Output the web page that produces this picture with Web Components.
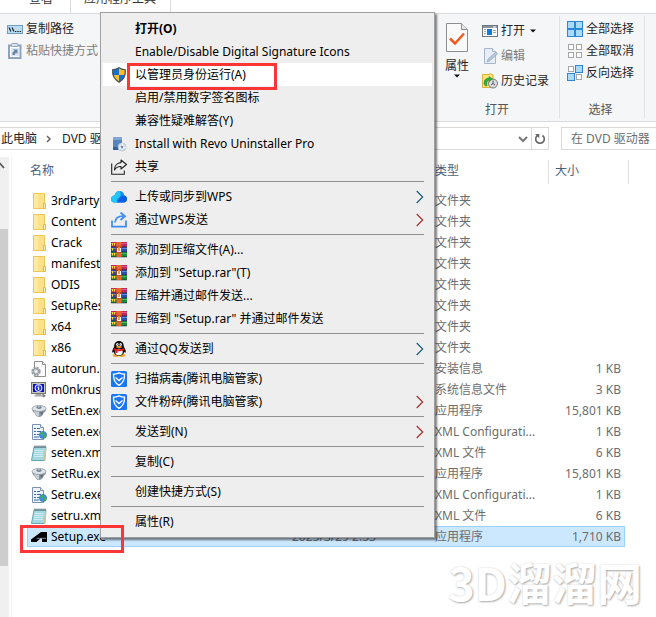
<!DOCTYPE html>
<html lang="zh-CN">
<head>
<meta charset="utf-8">
<title>DVD 驱动器</title>
<style>
html, body { margin: 0; height: 100%; overflow: hidden; background: #fff; }
body { font: 12px/16px "Noto Sans", "Noto Sans CJK SC", sans-serif; color: #000; }
</style>
</head>
<body>
<explorer-window></explorer-window>
<script>
const ICONS = {
  path: ['0 0 16 16', '<rect x="0.5" y="4.5" width="15" height="8" fill="#b9dcf7" stroke="#6f9fc6"/><path d="M2 6.5l2 4M5 6.5l2 4" stroke="#222" stroke-width="1.2"/><path d="M8 10h1.400v1H8zM10.300 10h1.400v1h-1.400zM12.600 10H14v1h-1.400z" fill="#222"/>'],
  paste: ['0 0 16 16', '<path d="M2 2.500h11.500v12.500H2z" fill="#fff" stroke="#8fa3bd" stroke-width="2"/><rect x="4.500" y="0.500" width="6.500" height="3" rx="1" fill="#dce3ec" stroke="#8fa3bd"/><rect x="4" y="5" width="8" height="8" fill="#dbe6f3"/><path d="M5.500 12V9.500L7.500 8 6 6.500h4.500V11L9 9.500 7.500 12z" fill="#6582a8"/>'],
  props: ['0 0 22 29', '<path d="M.5.5h15l6 6v22H.5z" fill="#fafafa" stroke="#8e8e8e"/><path d="M15.500.5v6h6" fill="#e6e6e6" stroke="#8e8e8e"/><path d="M4 15.500l5 5 9-10" fill="none" stroke="#f25a1c" stroke-width="2.500"/>'],
  open: ['0 0 16 16', '<rect x="0.500" y="2.500" width="15" height="11" fill="#fff" stroke="#6c7682"/><path d="M1 3h14v2H1z" fill="#8b949e"/><path d="M11 3.500h3v1h-3z" fill="#fff"/><rect x="5" y="6" width="5" height="6" fill="#0f7bd8"/><path d="M2 6.500h2M2 8.500h2M2 10.500h2M11 7.500h3M11 9.500h3" stroke="#9aa6b2"/>'],
  edit: ['0 0 16 16', '<path d="M2.500.5h8l3 3v12h-11z" fill="#e8eef7" stroke="#a6b6cf"/><path d="M10.500.5v3h3" fill="#fff" stroke="#a6b6cf"/><path d="M5 14l1-3 8-7 1.500 2-8 7z" fill="#b6c6de" stroke="#93a8c8" stroke-width=".7"/>'],
  history: ['0 0 16 16', '<path d="M.5 1.500H7l1.500-1L11 2v12.500H.5z" fill="#ffe37a" stroke="#d9b13b"/><circle cx="11" cy="10.500" r="4.500" fill="#d9dde0" stroke="#777"/><path d="M11 7.500v3l2 1.500M11 10.500l-2 1.500" fill="none" stroke="#555"/><path d="M2 10c0-3 2-5 5-5l0-1.500 3.500 2.500L7 8.500V7c-2 .5-2.500 2.500-2 6-2 0-3-1-3-3z" fill="#2fae3b" stroke="#1b8a2a" stroke-width=".5"/>'],
  selall: ['0 0 16 16', '<g fill="#aad9fa" stroke="#2b88d8"><rect x=".5" y=".5" width="7" height="7"/><rect x="8.500" y=".5" width="7" height="7"/><rect x=".5" y="8.500" width="7" height="7"/><rect x="8.500" y="8.500" width="7" height="7"/></g>'],
  selnone: ['0 0 16 16', '<g fill="#fff" stroke="#a6a6a6"><rect x="1.500" y="1.500" width="5" height="5"/><rect x="9.500" y="1.500" width="5" height="5"/><rect x="1.500" y="9.500" width="5" height="5"/><rect x="9.500" y="9.500" width="5" height="5"/></g>'],
  selinv: ['0 0 16 16', '<g fill="#fff" stroke="#a6a6a6"><rect x="1.500" y="1.500" width="5" height="5"/><rect x="9.500" y="9.500" width="5" height="5"/></g><g fill="#aad9fa" stroke="#2b88d8"><rect x="8.500" y=".5" width="7" height="7"/><rect x=".5" y="8.500" width="7" height="7"/></g>'],
  shield: ['0 0 16 16', '<path d="M8 .5c2 1.300 4 1.800 6.500 2C15 8.500 12.500 13 8 15.500 3.500 13 1 8.500 1.500 2.500 4 2.300 6 1.800 8 .5z" fill="#fbbc2e"/><path d="M8 .5V8H1.700C1.400 6 1.400 4 1.500 2.500 4 2.300 6 1.800 8 .5zM8 8h6.300c-.8 3.300-2.900 5.900-6.300 7.500z" fill="#1670d0"/><path d="M8 .8c2 1.300 4 1.800 6.300 2C14.800 8.500 12.300 12.700 8 15.200 3.700 12.700 1.200 8.500 1.700 2.800 4 2.600 6 2.100 8 .8z" fill="none" stroke="#4a5560" stroke-width="1.200"/>'],
  revo: ['0 0 16 16', '<path d="M2 1h9v13H2z" fill="#5585bd"/><path d="M2 1h9v3H2z" fill="#7fa6d2"/><path d="M2 11h6v3H2z" fill="#34619a"/><circle cx="11" cy="11" r="4" fill="#d7e2ef" stroke="#a9bbcf" stroke-width=".7"/><circle cx="11" cy="11" r="1.300" fill="#6c8db3"/><path d="M11 7l1 3M15 11l-3 1M8 13l2-1.500" stroke="#fff"/>'],
  share: ['0 0 16 16', '<path d="M.7 4.500v10.800h12.600V11.500" fill="none" stroke="#222" stroke-width="1.100"/><path d="M10 1l5.500 4.500L10 10V7.500C7 7.300 5 8.500 3.500 11 3.500 7 6 3.800 10 3.600z" fill="none" stroke="#222" stroke-width="1.100" stroke-linejoin="round"/>'],
  cloud: ['0 0 16 16', '<path d="M3.500 13.500C1 13.500 0 11.700 0 10c0-2 1.500-3.500 3.500-3.500C4 4 6 2 8.500 2c2.700 0 4.500 2 4.700 4.500C15 7 16 8.300 16 10c0 2-1.400 3.500-3.300 3.500z" fill="#1389f5"/><path d="M3.500 13.500C1 13.500 0 11.700 0 10c0-2 1.500-3.500 3.500-3.500C4 4 6 2 8.500 2c2 2.500 1.500 5-1 7-1.500 1.300-2 3-1.500 4.500z" fill="#25c5f2"/><path d="M6 13.500c2-4.500 4-6.500 7.200-7C15 7 16 8.300 16 10c0 2-1.400 3.500-3.300 3.500z" fill="#0b60e8"/>'],
  send: ['0 0 16 16', '<path d="M1 8.500V14.700h14V8.500" fill="none" stroke="#3f8cf3" stroke-width="1.800"/><path d="M4 10.500c.3-3.800 2.500-6.300 8-6.300" fill="none" stroke="#3f8cf3" stroke-width="1.800"/><path d="M9.500.5L14 4.200 9.500 8" fill="none" stroke="#3f8cf3" stroke-width="1.800"/>'],
  rar: ['0 0 16 16', '<path d="M0 0h16v5H0z" fill="#c4275e"/><path d="M0 1h16v1H0z" fill="#e25486"/><path d="M0 5h16v5H0z" fill="#2c4fb5"/><path d="M0 6h16v1H0z" fill="#5f8ae0"/><path d="M0 10h16v5H0z" fill="#1c8c3a"/><path d="M0 11h16v1H0z" fill="#47b85c"/><path d="M0 4.500h16v.7H0zM0 9.500h16v.7H0zM0 14.500h16v.7H0z" fill="#282838"/><path d="M1.500 1v2.500M1.500 6v2.500M1.500 11v2.500M3.500 1v2.500M3.500 11v2.500" stroke="#ffd83a"/><path d="M5.500 0h5v15h-5z" fill="#e8662a"/><path d="M5 4.500h6v6H5z" fill="#b23a1e"/><path d="M6 10V6h1.200v3h1.600V6H10v4" fill="#fff"/><path d="M7.500 5h1v4h-1z" fill="#ffe25a"/>'],
  qq: ['0 0 16 16', '<ellipse cx="5" cy="14.500" rx="3.300" ry="1.400" fill="#f5a623"/><ellipse cx="11" cy="14.500" rx="3.300" ry="1.400" fill="#f5a623"/><path d="M8 0c3.200 0 4.800 2.300 4.800 5.500 1 2 2 3.500 2 5.500 0 .8-.7.800-1.500-.3-.5 2.600-2.500 4-5.300 4s-4.800-1.400-5.300-4c-.8 1.100-1.500 1.100-1.500.3 0-2 1-3.500 2-5.500C3.200 2.300 4.800 0 8 0z" fill="#0b0b0b"/><ellipse cx="8" cy="11" rx="3.700" ry="3.200" fill="#fff"/><ellipse cx="6.400" cy="3.500" rx="1.200" ry="1.600" fill="#fff"/><ellipse cx="9.600" cy="3.500" rx="1.200" ry="1.600" fill="#fff"/><circle cx="6.800" cy="3.700" r=".5"/><circle cx="9.200" cy="3.700" r=".5"/><ellipse cx="8" cy="6" rx="3" ry="1" fill="#f5a623"/><path d="M3 7.200c3 1.500 7 1.500 10 0l.5 1.800c-2 1-4.500 1.400-7 1.200V12H4.500V9.700L2.500 9z" fill="#e01f26"/>'],
  guard: ['0 0 16 16', '<rect width="16" height="16" rx="1.500" fill="#1877f2"/><path d="M8 1.800c1.800.9 3.400 1.300 5.500 1.300.2 5.500-1.500 9-5.500 11.200C4 12.100 2.300 8.600 2.500 3.100 4.600 3.100 6.200 2.700 8 1.800z" fill="none" stroke="#fff" stroke-width="1.400"/><path d="M4.500 6.500L8 9.500l3.500-3" fill="none" stroke="#fff" stroke-width="1.500"/>'],
  folder: ['0 0 16 16', '<path d="M2.500.5h11v15h-11z" fill="#fde08a" stroke="#edc657"/><path d="M3 1h4v14H3z" fill="#ffeaa3"/><path d="M12.500 10.500h2v5h-2z" fill="#fff1b8" stroke="#e3b93f"/>'],
  inf: ['0 0 16 16', '<path d="M3.500.5h8l3 3v12h-11z" fill="#fafafa" stroke="#8c8c8c"/><path d="M11.500.5v3h3" fill="#fff" stroke="#8c8c8c"/><circle cx="5" cy="10.500" r="3.500" fill="none" stroke="#98a2a8" stroke-width="2.500" stroke-dasharray="2 .75"/><circle cx="5" cy="10.500" r="2.800" fill="#c9d1d5" stroke="#8d979d"/><circle cx="5" cy="10.500" r="1" fill="#fff"/>'],
  nfo: ['0 0 16 16', '<rect x=".5" y=".5" width="14" height="11" fill="#c8c8c0" stroke="#77776e"/><rect x="2" y="2" width="11" height="8" fill="#0c13b0"/><circle cx="7.500" cy="6" r="3.500" fill="#2438e2" stroke="#fff"/><path d="M7 3.500h1.200v1H7zM6.500 5.300h1.700V8H7V6h-.5z" fill="#fff"/><path d="M5 12h5l2 2.500H3z" fill="#aaa"/><path d="M11 11l4 3-3 1.500z" fill="#777"/>'],
  disc: ['0 0 16 16', '<path d="M1 5.500l14-.5c.5 2-.5 4-2.500 5-.5 2.500-2.500 4-4.500 4s-3.500-1.500-4.500-4C2 9 1 7.500 1 5.500z" fill="#8b969f"/><path d="M3 7h5v6.500C5 13 3 10 3 7z" fill="#c6ced4"/><ellipse cx="8" cy="5.500" rx="7" ry="3" fill="#dfe5ea" stroke="#8c98a2" stroke-width=".8"/><ellipse cx="8" cy="4.500" rx="2.700" ry="1.400" fill="#77848f"/><path d="M7 2h2v2.500H7z" fill="#aeb8c0"/><path d="M9 9.500l3-1-1 3.500z" fill="#5d6871"/>'],
  config: ['0 0 16 16', '<path d="M1.500.5h8l3 3v12h-11z" fill="#edf5fe" stroke="#7c91b5"/><path d="M9.500.5v3h3" fill="#fff" stroke="#7c91b5"/><path d="M3 4.500h2M6 4.500h3M3 7.500h2M6 7.500h4M3 10.500h2M6 10.500h2M3 13h5" stroke="#3d66a8"/><circle cx="12" cy="11" r="3.600" fill="#3f8fdc" stroke="#2766a5" stroke-width=".6"/><path d="M9.500 9c2-2.500 3-1 3 0s-1 1-1.500 2.500L9.500 11zM13 11l2.200-.5c0 2-1 3.500-2.200 3.800z" fill="#3fb04a"/>'],
  xml: ['0 0 16 16', '<path d="M3 2h12l-1.500 13.500H.5z" fill="#a3d8e0" stroke="#6aa5b0"/><path d="M14 3h1.500l-1 12.500H13z" fill="#d9c48a"/><path d="M3.500 5.500h9M3.300 7.500h9M3.100 9.500h9M2.900 11.500h9" stroke="#d8f3f6" stroke-width=".8"/><path d="M4 .5V3M6 .5V3M8 .5V3M10 .5V3M12 .5V3M14 .5V3" stroke="#56656b"/>'],
  setup: ['0 0 16 16', '<path d="M0 13V10.500L10 3h6v10h-5V9.500H9.500L5.500 13z" fill="#000"/><path d="M5.500 9.300H15" stroke="#cce8ff" stroke-width=".6"/>'],
  arrow: ['0 0 8 14', '<path d="M.7 1l6 6-6 6" fill="none" stroke="var(--stroke,#222)" stroke-width="1.100"/>'],
  caret: ['0 0 6 4', '<path d="M0 .5h6L3 3.500z" fill="#111"/>'],
  chev: ['0 0 10 10', '<path d="M3 2l3 3-3 3" fill="none" stroke="#666" stroke-width="1.500"/>'],
  down: ['0 0 10 10', '<path d="M1 3l4 4 4-4" fill="none" stroke="#777" stroke-width="2"/>'],
  up: ['0 0 10 10', '<path d="M1 7l4-4.500L9 7" fill="none" stroke="#555" stroke-width="1.800"/>'],
  refresh: ['0 0 12 12', '<path d="M8.500 2.500A4.300 4.300 0 1 1 3.500 2.500" fill="none" stroke="#666" stroke-width="1.600"/><path d="M1 1h4.300v4.300z" fill="#666"/>']
};

const define = (name, html, setup) => {
  const template = document.createElement('template');
  template.innerHTML = html;
  customElements.define(name, class extends HTMLElement {
    connectedCallback() {
      if (this.shadowRoot) return;
      const root = this.attachShadow({ mode: 'open' });
      root.append(template.content.cloneNode(true));
      if (setup) setup(this, root);
    }
  });
};

define('app-icon', `<style>
  :host { display: inline-block; flex: none; width: 16px; height: 16px; }
  svg { display: block; width: 100%; height: 100%; }
</style>`, (host, root) => {
  const [box, body] = ICONS[host.getAttribute('name')];
  root.innerHTML += `<svg viewBox="${box}" aria-hidden="true">${body}</svg>`;
});

define('menu-item', `<style>
  :host { display: block; }
  button { display: flex; align-items: center; gap: 8px; width: 100%; height: 23px; padding: 0 8px;
    border: 0; background: none; font: inherit; color: inherit; text-align: left; white-space: nowrap; }
  :host([active]) button { background: #fff; }
  :host([bold]) button { font-weight: bold; }
  .icon { width: 16px; height: 16px; flex: none; }
  .label { flex: 1; }
  .arrow { width: 8px; height: 14px; }
</style><button type="button" role="menuitem"><span class="icon"></span><span class="label"><slot></slot></span></button>`, (host, root) => {
  const icon = host.getAttribute('icon'), sub = host.getAttribute('sub');
  if (icon) root.querySelector('.icon').innerHTML = `<app-icon name="${icon}"></app-icon>`;
  if (sub) root.querySelector('button').insertAdjacentHTML('beforeend', `<app-icon class="arrow" name="arrow" style="--stroke:${sub}"></app-icon>`);
});

define('menu-separator', `<style>
  :host { display: block; padding: 3px 8px; }
  hr { margin: 0; border: 0; height: 1px; background: #919191; }
</style><hr>`);

define('context-menu', `<style>
  :host { display: block; box-sizing: border-box; padding: 4px 2px; border: 1px solid #a0a0a0;
    background: #eee; box-shadow: 2px 2px 2px rgba(0,0,0,.5); }
</style><div role="menu"><slot></slot></div>`);

define('ribbon-button', `<style>
  :host { display: block; }
  button { display: flex; align-items: center; gap: 3px; border: 0; padding: 0; background: none;
    font: inherit; color: #262626; white-space: nowrap; height: 22px; }
  :host([off]) button { color: #7d7d7d; }
  :host([tall]) button { height: 25px; }
  :host([big]) button { flex-direction: column; height: auto; gap: 0; }
  :host([big]) app-icon:first-child { width: 22px; height: 29px; margin-bottom: 6px; }
  .caret { width: 6px; height: 4px; margin-left: 2px; }
  :host([big]) .caret { margin: 0; }
</style><button type="button"><slot></slot></button>`, (host, root) => {
  const b = root.querySelector('button');
  b.insertAdjacentHTML('afterbegin', `<app-icon name="${host.getAttribute('icon')}"></app-icon>`);
  if (host.hasAttribute('drop')) b.insertAdjacentHTML('beforeend', '<app-icon class="caret" name="caret"></app-icon>');
});

define('ribbon-group', `<style>
  :host { display: flex; flex-direction: column; justify-content: space-between; padding: 4px 10px 3px 7px; }
  .body { display: flex; gap: 13px; }
  .title { text-align: center; color: #555; }
</style><div class="body"><slot></slot></div><div class="title"></div>`, (host, root) => {
  root.querySelector('.title').textContent = host.getAttribute('label') || '';
});

define('ribbon-bar', `<style>
  :host { display: block; }
  nav { display: flex; align-items: flex-end; height: 13px; padding-left: 11px; overflow: hidden; }
  nav button { flex: none; border: 0; border-right: 1px solid #dadbdc; background: none; font: inherit; color: #333; padding: 0 17px 6px 18px; }
  nav button + button { padding: 0 14px 6px 13px; }
  .ribbon { display: flex; height: 107px; background: #f5f6f7; border: solid #dadbdc; border-width: 1px 0; }
  .fill { flex: 1; }
  .rule { width: 1px; margin: 2px 0 3px; background: #e1e2e3; }
  .end { width: 11px; }
</style>
<nav><button type="button">查看</button><button type="button">应用程序工具</button></nav>
<div class="ribbon">
  <ribbon-group>
    <div><ribbon-button icon="path">复制路径</ribbon-button><ribbon-button icon="paste" off>粘贴快捷方式</ribbon-button></div>
  </ribbon-group>
  <div class="fill"></div>
  <ribbon-group label="打开">
    <ribbon-button icon="props" big drop style="margin-top:5px">属性</ribbon-button>
    <div><ribbon-button icon="open" tall drop>打开</ribbon-button><ribbon-button icon="edit" tall off>编辑</ribbon-button><ribbon-button icon="history" tall>历史记录</ribbon-button></div>
  </ribbon-group>
  <div class="rule"></div>
  <ribbon-group label="选择">
    <div><ribbon-button icon="selall">全部选择</ribbon-button><ribbon-button icon="selnone">全部取消</ribbon-button><ribbon-button icon="selinv">反向选择</ribbon-button></div>
  </ribbon-group>
  <div class="rule"></div><div class="end"></div>
</div>`);

define('address-bar', `<style>
  :host { display: flex; gap: 12px; padding: 5px 0 0; }
  .path { flex: 1; display: flex; align-items: stretch; box-sizing: border-box; height: 23px; border: solid #d9d9d9; border-width: 1px 1px 1px 0; }
  button { display: flex; align-items: center; border: 0; padding: 0; background: none; font: inherit; color: #222; white-space: nowrap; }
  .crumb { padding-left: 1px; }
  .sep { align-self: center; width: 10px; height: 10px; margin: 0 8px 0 7px; }
  .fill { flex: 1; }
  .down { padding: 0 1px 0 4px; }
  .down app-icon { width: 10px; height: 10px; }
  .refresh { border-left: 1px solid #d9d9d9; padding: 0 2px; margin-left: 2px; }
  .refresh app-icon { width: 12px; height: 12px; }
  input { box-sizing: border-box; width: 95px; height: 23px; padding: 0 0 0 9px; border: 1px solid #d9d9d9; border-right: 0; font: inherit; outline: 0; }
  input::placeholder { color: #6d6d6d; opacity: 1; }
</style>
<div class="path"><button type="button" class="crumb">此电脑</button><app-icon class="sep" name="chev"></app-icon><button type="button">DVD 驱动器</button><div class="fill"></div>
<button type="button" class="down" aria-label="历史"><app-icon name="down"></app-icon></button>
<button type="button" class="refresh" aria-label="刷新"><app-icon name="refresh"></app-icon></button></div>
<input type="text" aria-label="搜索" placeholder="在 DVD 驱动器">`);

define('scroll-rail', `<style>
  :host { display: flex; flex-direction: column; width: 9px; background: #f0f0f0; margin-top: 7px; border-right: 2px solid #fff; box-shadow: 1px 0 #f2f2f2; }
  .up { border: 0; padding: 4px 0 0; background: none; height: 72px; overflow: hidden; display: flex; justify-content: flex-end; flex: none; }
  .up app-icon { width: 10px; height: 10px; margin-right: 4px; }
  .thumb { width: 8px; flex: 337 0 0; background: #cdcdcd; }
  .rest { flex: 51 0 0; }
</style><button type="button" class="up" aria-label="向上滚动"><app-icon name="up"></app-icon></button><div class="thumb"></div><div class="rest"></div>`);

const FILES = [
  ['folder', '3rdParty'], ['folder', 'Content'], ['folder', 'Crack'], ['folder', 'manifest'],
  ['folder', 'ODIS'], ['folder', 'SetupRes'], ['folder', 'x64'], ['folder', 'x86'],
  ['inf', 'autorun.inf', '安装信息', '1 KB'], ['nfo', 'm0nkrus.nfo', '系统信息文件', '3 KB'],
  ['disc', 'SetEn.exe', '应用程序', '15,801 KB'], ['config', 'Seten.exe', 'XML Configurati...', '1 KB'],
  ['xml', 'seten.xml', 'XML 文件', '6 KB'], ['disc', 'SetRu.exe', '应用程序', '15,801 KB'],
  ['config', 'Setru.exe', 'XML Configurati...', '1 KB'], ['xml', 'setru.xml', 'XML 文件', '6 KB'],
  ['setup', 'Setup.exe', '应用程序', '1,710 KB', '2023/3/29 2:33']
];

define('file-table', `<style>
  :host { display: block; flex: 1; padding: 10px 27px 0 16px; }
  table { width: 100%; table-layout: fixed; border-collapse: separate; border-spacing: 0; }
  th { padding: 0 0 6px; font-weight: normal; text-align: left; color: #4c607a; }
  th span { display: block; height: 21px; padding: 3px 0 0; }
  th:first-child span { padding-left: 3px; }
  th.line span { border-right: 1px solid #e0e0e0; }
  th:nth-child(4) span { padding-left: 6px; }
  td { box-sizing: border-box; height: 21px; padding: 0; border: 0 solid #99d1ff; color: #6d6d6d; white-space: nowrap; }
  td:first-child { color: #000; }
  .name { display: flex; align-items: center; gap: 4px; padding-left: 4px; }
  td:nth-child(4) { text-align: right; padding-right: 4px; }
  tr.sel td:not(:last-child) { background: #cce8ff; border-width: 1px 0; }
  tr.sel td:first-child { border-left-width: 1px; }
  tr.sel td:first-child .name { padding-left: 3px; }
  tr.sel td:nth-child(4) { border-right-width: 1px; padding-right: 3px; }
</style>
<table><colgroup><col style="width:265px"><col style="width:143px"><col><col style="width:76px"><col style="width:4px"></colgroup>
<thead><tr><th><span>名称</span></th><th></th><th class="line"><span>类型</span></th><th><span>大小</span></th><th class="line"><span></span></th></tr></thead><tbody></tbody></table>`, (host, root) => {
  root.querySelector('tbody').innerHTML = FILES.map(([icon, name, type = '文件夹', size = '', date = '']) =>
    `<tr${icon === 'setup' ? ' class="sel"' : ''}><td><div class="name"><app-icon name="${icon}"></app-icon>${name}</div></td><td>${date}</td><td>${type}</td><td>${size}</td><td></td></tr>`).join('');
});

define('site-mark', `<style>
  :host { display: block; font: bold 45px/48px "Noto Sans CJK SC", sans-serif; color: #fff; text-shadow: 1px 1px 2px #aaa, 0 0 2px #ddd; white-space: nowrap; }
</style><slot></slot>`);

define('explorer-window', `<style>
  :host { position: relative; display: flex; flex-direction: column; height: 100%; overflow: hidden; }
  .main { flex: 1; display: flex; min-height: 0; }
  context-menu { position: absolute; left: 100px; top: 12px; width: 335px; }
  .mark { position: absolute; box-sizing: border-box; border: 3px solid #fc3637; pointer-events: none; }
  .run { left: 127px; top: 63px; width: 150px; height: 27px; }
  .exe { left: 20px; top: 525px; width: 104px; height: 28px; }
  site-mark { position: absolute; right: 14px; bottom: 11px; }
</style>
<ribbon-bar></ribbon-bar>
<address-bar></address-bar>
<div class="main"><scroll-rail></scroll-rail><file-table></file-table></div>
<context-menu>
  <menu-item bold>打开(O)</menu-item>
  <menu-item>Enable/Disable Digital Signature Icons</menu-item>
  <menu-item icon="shield" active>以管理员身份运行(A)</menu-item>
  <menu-item>启用/禁用数字签名图标</menu-item>
  <menu-item>兼容性疑难解答(Y)</menu-item>
  <menu-item icon="revo">Install with Revo Uninstaller Pro</menu-item>
  <menu-item icon="share">共享</menu-item>
  <menu-separator></menu-separator>
  <menu-item icon="cloud" sub="#0f5d78">上传或同步到WPS</menu-item>
  <menu-item icon="send" sub="#a02a2a">通过WPS发送</menu-item>
  <menu-separator></menu-separator>
  <menu-item icon="rar">添加到压缩文件(A)...</menu-item>
  <menu-item icon="rar">添加到 "Setup.rar"(T)</menu-item>
  <menu-item icon="rar">压缩并通过邮件发送...</menu-item>
  <menu-item icon="rar">压缩到 "Setup.rar" 并通过邮件发送</menu-item>
  <menu-separator></menu-separator>
  <menu-item icon="qq" sub="#0f5d78">通过QQ发送到</menu-item>
  <menu-separator></menu-separator>
  <menu-item icon="guard">扫描病毒(腾讯电脑管家)</menu-item>
  <menu-item icon="guard" sub="#a02a2a">文件粉碎(腾讯电脑管家)</menu-item>
  <menu-separator></menu-separator>
  <menu-item sub="#a02a2a">发送到(N)</menu-item>
  <menu-separator></menu-separator>
  <menu-item>复制(C)</menu-item>
  <menu-separator></menu-separator>
  <menu-item>创建快捷方式(S)</menu-item>
  <menu-separator></menu-separator>
  <menu-item>属性(R)</menu-item>
</context-menu>
<div class="mark run"></div>
<div class="mark exe"></div>
<site-mark>3D溜溜网</site-mark>`);
</script>
</body>
</html>
